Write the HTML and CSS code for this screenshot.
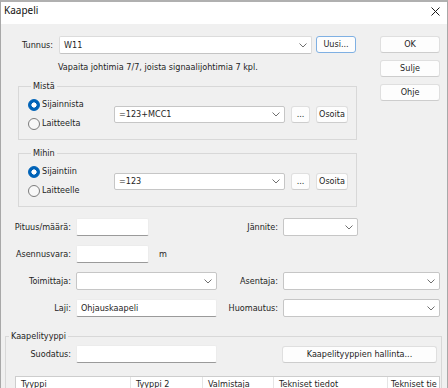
FILE: index.html
```html
<!DOCTYPE html>
<html lang="fi">
<head>
<meta charset="utf-8">
<title>Kaapeli</title>
<link rel="stylesheet" href="styles.css">
</head>
<body>
<div class="window">
  <div class="titlebar">
    <span class="title">Kaapeli</span>
    <svg class="close" width="9" height="9" viewBox="0 0 9 9"><path d="M0.5 0.5L8.5 8.5M8.5 0.5L0.5 8.5" stroke="#1a1a1a" stroke-width="1" fill="none"/></svg>
  </div>

  <div class="upper">
    <div class="upper-main">
      <div class="tunnus-row">
        <span class="lbl tunnus-lbl">Tunnus:</span>
        <div class="combo combo-light w-tunnus"><span>W11</span><svg class="chev" width="8" height="5" viewBox="0 0 8 5"><path d="M0.5 0.5L4 4L7.5 0.5" stroke="#707070" fill="none"/></svg></div>
        <button class="btn btn-focus w-uusi">Uusi...</button>
      </div>
      <div class="info">Vapaita johtimia 7/7, joista signaalijohtimia 7 kpl.</div>

      <fieldset class="group group-top">
        <legend>Mistä</legend>
        <div class="group-row">
          <div class="radios">
            <div class="radio on"><span class="dot"></span>Sijainnista</div>
            <div class="radio"><span class="dot"></span>Laitteelta</div>
          </div>
          <div class="combo w-loc"><span>=123+MCC1</span><svg class="chev" width="8" height="5" viewBox="0 0 8 5"><path d="M0.5 0.5L4 4L7.5 0.5" stroke="#707070" fill="none"/></svg></div>
          <button class="btn w-dots">...</button>
          <button class="btn w-osoita">Osoita</button>
        </div>
      </fieldset>

      <fieldset class="group group-top">
        <legend>Mihin</legend>
        <div class="group-row">
          <div class="radios">
            <div class="radio on"><span class="dot"></span>Sijaintiin</div>
            <div class="radio"><span class="dot"></span>Laitteelle</div>
          </div>
          <div class="combo w-loc"><span>=123</span><svg class="chev" width="8" height="5" viewBox="0 0 8 5"><path d="M0.5 0.5L4 4L7.5 0.5" stroke="#707070" fill="none"/></svg></div>
          <button class="btn w-dots">...</button>
          <button class="btn w-osoita">Osoita</button>
        </div>
      </fieldset>
    </div>

    <div class="side">
      <button class="btn w-side">OK</button>
      <button class="btn w-side">Sulje</button>
      <button class="btn w-side">Ohje</button>
    </div>
  </div>

  <div class="fields">
    <span class="lbl">Pituus/määrä:</span>
    <div class="input w-short"></div>
    <span class="lbl">Jännite:</span>
    <div class="combo w-jannite"><span></span><svg class="chev" width="8" height="5" viewBox="0 0 8 5"><path d="M0.5 0.5L4 4L7.5 0.5" stroke="#707070" fill="none"/></svg></div>

    <span class="lbl">Asennusvara:</span>
    <div class="with-unit"><div class="input w-short"></div><span class="unit">m</span></div>
    <span></span>
    <span></span>

    <span class="lbl">Toimittaja:</span>
    <div class="combo w-mid"><span></span><svg class="chev" width="8" height="5" viewBox="0 0 8 5"><path d="M0.5 0.5L4 4L7.5 0.5" stroke="#707070" fill="none"/></svg></div>
    <span class="lbl">Asentaja:</span>
    <div class="combo w-wide"><span></span><svg class="chev" width="8" height="5" viewBox="0 0 8 5"><path d="M0.5 0.5L4 4L7.5 0.5" stroke="#707070" fill="none"/></svg></div>

    <span class="lbl">Laji:</span>
    <div class="input w-mid"><span>Ohjauskaapeli</span></div>
    <span class="lbl">Huomautus:</span>
    <div class="combo w-wide"><span></span><svg class="chev" width="8" height="5" viewBox="0 0 8 5"><path d="M0.5 0.5L4 4L7.5 0.5" stroke="#707070" fill="none"/></svg></div>
  </div>

  <fieldset class="group group-cable">
    <legend>Kaapelityyppi</legend>
    <div class="filter-row">
      <span class="lbl filter-lbl">Suodatus:</span>
      <div class="input w-mid"></div>
      <button class="btn w-manage">Kaapelityyppien hallinta...</button>
    </div>
    <div class="table">
      <div class="thead">
        <div class="th c1">Tyyppi</div>
        <div class="th c2">Tyyppi 2</div>
        <div class="th c3">Valmistaja</div>
        <div class="th c4">Tekniset tiedot</div>
        <div class="th c5">Tekniset tie</div>
      </div>
      <div class="tbody"></div>
    </div>
  </fieldset>
</div>
</body>
</html>
```

FILE: styles.css
```css
html, body {
  margin: 0;
  padding: 0;
  overflow: hidden;
  background: #f0f0f0;
}

body {
  font-family: "DejaVu Sans Condensed", "DejaVu Sans", sans-serif;
  font-size: 9px;
  line-height: 11px;
  color: #1e1e1e;
}

.window {
  box-sizing: border-box;
  width: 448px;
  height: 388px;
  overflow: hidden;
  background: #f0f0f0;
  border-left: 1px solid #a8a8a8;
  border-right: 1px solid #a8a8a8;
  border-top: 2px solid #b0b0b0;
}

.titlebar {
  height: 22px;
  background: #ffffff;
  display: flex;
  justify-content: space-between;
  align-items: flex-start;
}

.title {
  font-family: "Noto Sans", "Open Sans", sans-serif;
  font-size: 10px;
  line-height: 16px;
  padding-left: 3px;
  color: #111;
}

.close {
  margin-top: 5px;
  margin-right: 7px;
}

/* ---------- upper part ---------- */
.upper {
  display: flex;
  padding-top: 12px;
}

.upper-main {
  width: 357px;
}

.side {
  margin-left: 22px;
  display: flex;
  flex-direction: column;
  gap: 7px;
}

.tunnus-row {
  display: flex;
  align-items: flex-start;
  height: 18px;
}

.lbl {
  text-align: right;
  white-space: nowrap;
  align-self: center;
}

.tunnus-lbl {
  width: 52px;
  margin-right: 6px;
}

.info {
  margin-top: 7px;
  padding-left: 57px;
  line-height: 12px;
}

/* ---------- group boxes ---------- */
.group {
  box-sizing: border-box;
  margin: 0;
  padding: 0;
  border: 1px solid #d8d8d8;
  min-inline-size: 0;
}

.group legend {
  margin-left: 3px;
  padding: 0 2px;
  line-height: 11px;
}

.group-top {
  width: 339px;
  margin-left: 17px;
  margin-top: 8px;
  padding: 6px 0 9px 9px;
}

.group-top + .group-top {
  margin-top: 8px;
}

.group-row {
  display: flex;
  align-items: center;
}

.radios {
  width: 86px;
  display: flex;
  flex-direction: column;
  gap: 6px;
}

.radio {
  display: flex;
  align-items: center;
  height: 13px;
  white-space: nowrap;
}

.radio .dot {
  box-sizing: border-box;
  width: 12px;
  height: 12px;
  border-radius: 50%;
  border: 1px solid #7c7c7c;
  background: #f8f8f8;
  margin-right: 2px;
  flex: none;
}

.radio.on .dot {
  border-color: #0063b8;
  background: radial-gradient(circle, #ffffff 0 2.3px, #0063b8 2.9px);
}

/* ---------- controls ---------- */
.combo, .input {
  box-sizing: border-box;
  height: 18px;
  background: #ffffff;
  display: flex;
  align-items: center;
  line-height: 16px;
  flex: none;
}

.combo {
  justify-content: space-between;
  border: 1px solid #c6c6c6;
  border-radius: 2px;
  padding: 0 4px 0 4px;
}

.combo-light {
  border-color: #dcdcdc;
  border-bottom-color: #c4c4c4;
}

.input {
  border: 1px solid #ececec;
  border-bottom-color: #9a9a9a;
  border-radius: 2px;
  padding: 0 4px;
}

.chev {
  flex: none;
}

.btn {
  box-sizing: border-box;
  height: 17px;
  padding: 0;
  font: inherit;
  color: inherit;
  background: #fdfdfd;
  border: 1px solid #dfdfdf;
  border-bottom-color: #cdcdcd;
  border-radius: 3px;
  display: flex;
  align-items: center;
  justify-content: center;
  white-space: nowrap;
  flex: none;
}

.btn-focus {
  border-color: #7fb0e3;
}

.w-tunnus { width: 253px; }
.w-uusi { width: 40px; margin-left: 4px; }
.w-side { width: 60px; }
.w-loc { width: 171px; height: 17px; }
.w-dots { width: 19px; margin-left: 6px; }
.w-osoita { width: 32px; margin-left: 6px; }
.w-short { width: 73px; }
.w-mid { width: 141px; }
.w-jannite { width: 75px; }
.w-wide { width: 157px; }
.w-manage { width: 155px; margin-left: 65px; }

/* ---------- lower fields ---------- */
.fields {
  margin-top: 11px;
  display: grid;
  grid-template-columns: 75px 142px 65px 160px;
  grid-auto-rows: 18px;
  row-gap: 9px;
}

.fields .lbl {
  padding-right: 5px;
}

.with-unit {
  display: flex;
  align-items: center;
}

.unit {
  margin-left: 10px;
}

/* ---------- cable type group ---------- */
.group-cable {
  width: 437px;
  margin-left: 4px;
  margin-top: 14px;
  padding: 3px 0 0 0;
}

.filter-row {
  display: flex;
  align-items: flex-end;
}

.filter-lbl {
  width: 70px;
  padding-right: 5px;
  box-sizing: border-box;
}

.table {
  margin-top: 13px;
  margin-left: 9px;
  width: 425px;
  background: #ffffff;
  border: 1px solid #cdcdcd;
  box-sizing: border-box;
}

.thead {
  display: flex;
  height: 16px;
  border-bottom: 1px solid #e5e5e5;
  overflow: hidden;
}

.th {
  box-sizing: border-box;
  flex: none;
  padding-left: 5px;
  line-height: 15px;
  border-right: 1px solid #e5e5e5;
  white-space: nowrap;
}

.c1 { width: 115px; }
.c2 { width: 72px; }
.c3 { width: 71px; }
.c4 { width: 114px; }
.c5 { width: 51px; border-right: 0; padding-left: 3px; }

.tbody {
  height: 60px;
}
```
